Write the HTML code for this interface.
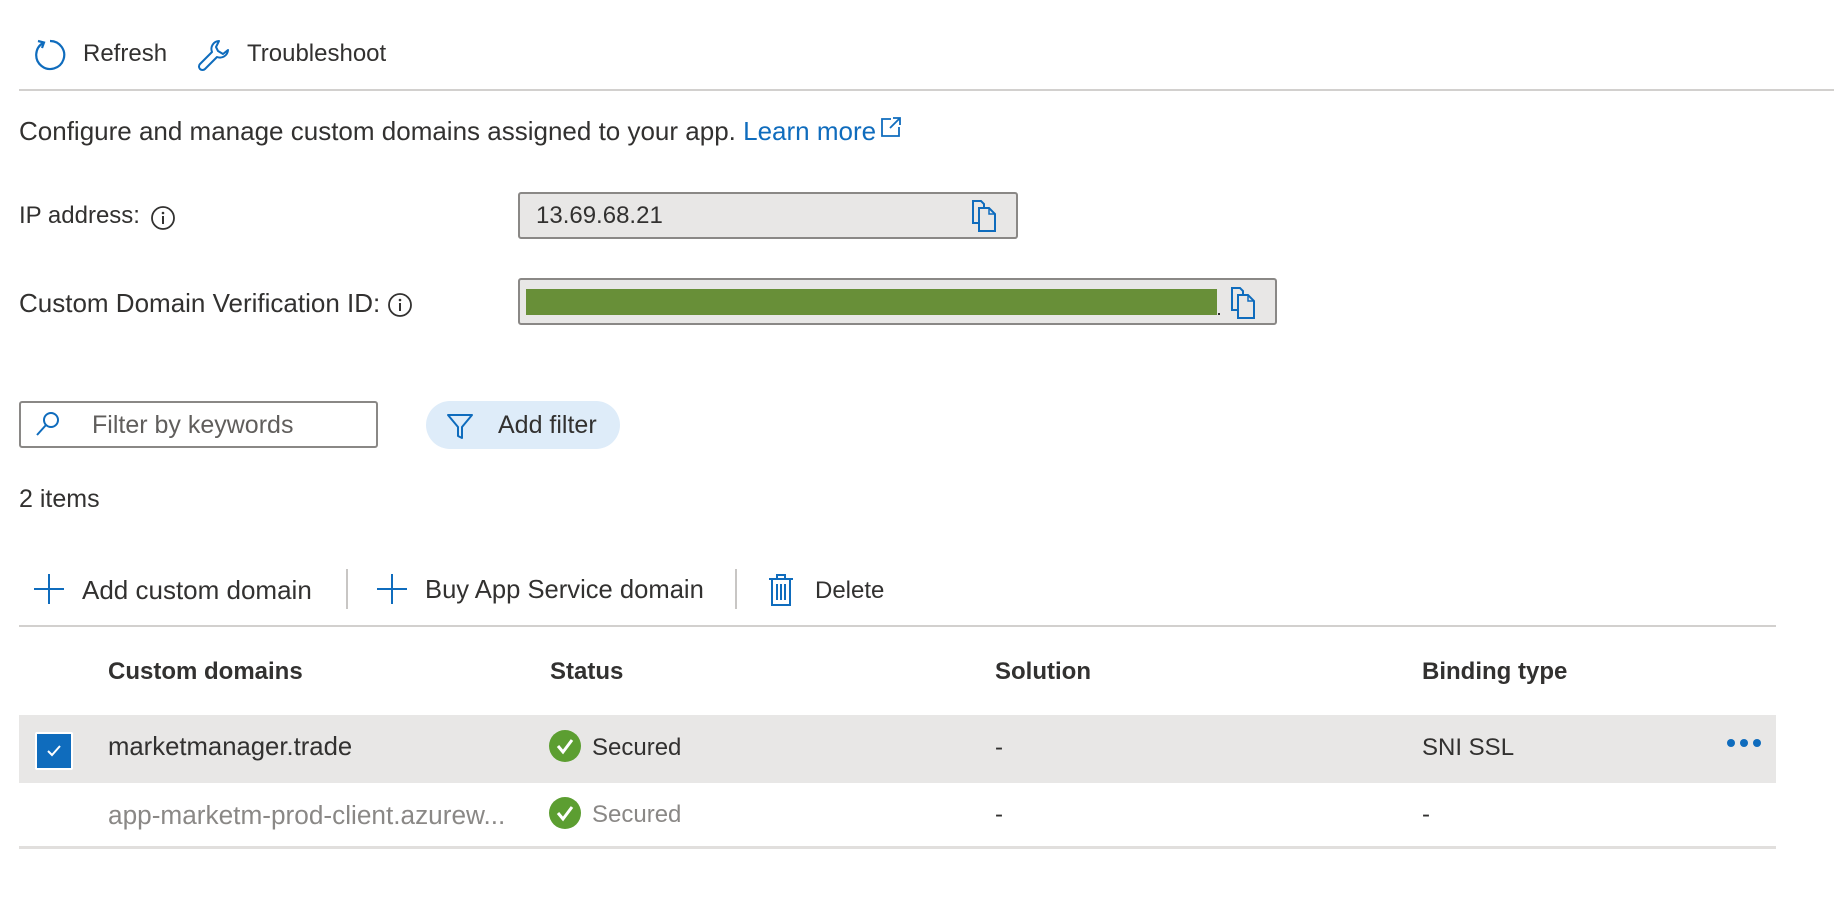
<!DOCTYPE html>
<html><head><meta charset="utf-8"><style>
*{margin:0;padding:0;box-sizing:border-box}
body{width:1834px;height:918px;background:#fff;font-family:"Liberation Sans",Arial,sans-serif;font-size:24px;color:#323130;position:relative;overflow:hidden}
.a{position:absolute;white-space:nowrap}
.l{font-size:26px}
.blue{color:#0f6cbd}
.box{position:absolute;background:#e8e7e6;border:2px solid #8a8886;border-radius:3px}
.hd{font-weight:bold;color:#323130}
</style></head><body>
<svg class="a" style="left:33px;top:38px" width="34" height="34" viewBox="0 0 34 34"><path d="M10 5 A14 14 0 1 0 17 3" fill="none" stroke="#0f6cbd" stroke-width="2.2"/><path d="M5 3 L11 4.5 L9 10" fill="none" stroke="#0f6cbd" stroke-width="2.2"/></svg>
<div class="a" style="left:83px;top:40px">Refresh</div>
<svg class="a" style="left:197px;top:38px" width="34" height="34" viewBox="0 0 34 34"><path d="M22 3 A8 8 0 0 0 15 14 L3 26 A3 3 0 0 0 8 31 L20 19 A8 8 0 0 0 31 12 L26 16 L21 13 L19 9 Z" fill="none" stroke="#0f6cbd" stroke-width="2" stroke-linejoin="round"/></svg>
<div class="a" style="left:247px;top:40px">Troubleshoot</div>
<div class="a" style="left:19px;top:89px;width:1815px;height:2px;background:#d2d0ce"></div>

<div class="a l" style="left:19px;top:116px">Configure and manage custom domains assigned to your app. <span class="blue">Learn more</span></div>
<svg class="a" style="left:879px;top:115px" width="24" height="24" viewBox="0 0 24 24"><path d="M12 4H3V21H20V12M14 3H21V10M21 3L11 13" fill="none" stroke="#0f6cbd" stroke-width="1.8"/></svg>

<div class="a" style="left:19px;top:202px">IP address:</div>
<svg class="a" style="left:150px;top:205px" width="26" height="26" viewBox="0 0 26 26"><circle cx="13" cy="13" r="11" fill="none" stroke="#323130" stroke-width="1.8"/><rect x="12" y="11" width="2" height="8" fill="#323130"/><circle cx="13" cy="8" r="1.3" fill="#323130"/></svg>
<div class="box" style="left:518px;top:192px;width:500px;height:47px"></div>
<div class="a" style="left:536px;top:202px">13.69.68.21</div>
<svg class="a" style="left:970px;top:199px" width="30" height="34" viewBox="0 0 30 34"><path d="M3 2H11L14 5V24H3Z" fill="none" stroke="#0f6cbd" stroke-width="2"/><path d="M9 9H19L25 15V32H9Z" fill="#e8e7e6" stroke="#0f6cbd" stroke-width="2"/><path d="M19 9V15H25" fill="none" stroke="#0f6cbd" stroke-width="1.5"/></svg>

<div class="a l" style="left:19px;top:288px">Custom Domain Verification ID:</div>
<svg class="a" style="left:387px;top:292px" width="26" height="26" viewBox="0 0 26 26"><circle cx="13" cy="13" r="11" fill="none" stroke="#323130" stroke-width="1.8"/><rect x="12" y="11" width="2" height="8" fill="#323130"/><circle cx="13" cy="8" r="1.3" fill="#323130"/></svg>
<div class="box" style="left:518px;top:278px;width:759px;height:47px"></div>
<div class="a" style="left:526px;top:289px;width:691px;height:26px;background:#688f38"></div>
<div class="a" style="left:1218px;top:313px;width:2px;height:2px;background:#323130"></div>
<svg class="a" style="left:1229px;top:286px" width="30" height="34" viewBox="0 0 30 34"><path d="M3 2H11L14 5V24H3Z" fill="none" stroke="#0f6cbd" stroke-width="2"/><path d="M9 9H19L25 15V32H9Z" fill="#e8e7e6" stroke="#0f6cbd" stroke-width="2"/><path d="M19 9V15H25" fill="none" stroke="#0f6cbd" stroke-width="1.5"/></svg>

<div class="a" style="left:19px;top:401px;width:359px;height:47px;border:2px solid #8a8886;border-radius:3px"></div>
<svg class="a" style="left:34px;top:410px" width="28" height="28" viewBox="0 0 28 28"><circle cx="17" cy="10" r="7" fill="none" stroke="#0f6cbd" stroke-width="2"/><path d="M12 15L3 25" stroke="#0f6cbd" stroke-width="2"/></svg>
<div class="a" style="left:92px;top:411px;color:#605e5c;font-size:25px">Filter by keywords</div>
<div class="a" style="left:426px;top:401px;width:194px;height:48px;background:#deecf9;border-radius:24px"></div>
<svg class="a" style="left:445px;top:411px" width="30" height="30" viewBox="0 0 30 30"><path d="M3 4H27L17 16V27L13 25V16Z" fill="none" stroke="#0f6cbd" stroke-width="2" stroke-linejoin="round"/></svg>
<div class="a" style="left:498px;top:411px;font-size:25px">Add filter</div>

<div class="a" style="left:19px;top:485px;font-size:25px">2 items</div>

<svg class="a" style="left:33px;top:573px" width="32" height="32" viewBox="0 0 32 32"><path d="M16 1V31M1 16H31" stroke="#0f6cbd" stroke-width="2"/></svg>
<div class="a l" style="left:82px;top:575px">Add custom domain</div>
<div class="a" style="left:346px;top:569px;width:2px;height:40px;background:#c8c6c4"></div>
<svg class="a" style="left:376px;top:573px" width="32" height="32" viewBox="0 0 32 32"><path d="M16 1V31M1 16H31" stroke="#0f6cbd" stroke-width="2"/></svg>
<div class="a" style="left:425px;top:576px;font-size:25.6px">Buy App Service domain</div>
<div class="a" style="left:735px;top:569px;width:2px;height:40px;background:#c8c6c4"></div>
<svg class="a" style="left:767px;top:572px" width="28" height="36" viewBox="0 0 28 36"><path d="M2 7H26M10 7V3H18V7M5 7V33H23V7M10 12V28M14 12V28M18 12V28" fill="none" stroke="#0f6cbd" stroke-width="2"/></svg>
<div class="a" style="left:815px;top:577px">Delete</div>
<div class="a" style="left:19px;top:625px;width:1757px;height:2px;background:#d2d0ce"></div>

<div class="a hd" style="left:108px;top:658px">Custom domains</div>
<div class="a hd" style="left:550px;top:658px">Status</div>
<div class="a hd" style="left:995px;top:658px">Solution</div>
<div class="a hd" style="left:1422px;top:658px">Binding type</div>

<div class="a" style="left:19px;top:715px;width:1757px;height:68px;background:#e8e7e6"></div>
<div class="a" style="left:35px;top:732px;width:38px;height:38px;background:#0f6cbd;border:2px solid #fff;border-radius:2px"></div>
<svg class="a" style="left:44px;top:741px" width="20" height="20" viewBox="0 0 20 20"><path d="M4 10L8 14L16 5" fill="none" stroke="#fff" stroke-width="2"/></svg>
<div class="a" style="left:108px;top:733px;font-size:25.7px">marketmanager.trade</div>
<svg class="a" style="left:549px;top:730px" width="32" height="32" viewBox="0 0 32 32"><circle cx="16" cy="16" r="16" fill="#5c9e31"/><path d="M9 16L14 22L23 10" fill="none" stroke="#fff" stroke-width="3"/></svg>
<div class="a" style="left:592px;top:734px">Secured</div>
<div class="a" style="left:995px;top:734px">-</div>
<div class="a" style="left:1422px;top:734px">SNI SSL</div>
<svg class="a" style="left:1726px;top:737px" width="36" height="12" viewBox="0 0 36 12"><circle cx="5" cy="6" r="4" fill="#0f6cbd"/><circle cx="18" cy="6" r="4" fill="#0f6cbd"/><circle cx="31" cy="6" r="4" fill="#0f6cbd"/></svg>

<div class="a" style="left:108px;top:800px;color:#8a8886;font-size:26.2px">app-marketm-prod-client.azurew...</div>
<svg class="a" style="left:549px;top:797px" width="32" height="32" viewBox="0 0 32 32"><circle cx="16" cy="16" r="16" fill="#5c9e31"/><path d="M9 16L14 22L23 10" fill="none" stroke="#fff" stroke-width="3"/></svg>
<div class="a" style="left:592px;top:801px;color:#8a8886">Secured</div>
<div class="a" style="left:995px;top:801px">-</div>
<div class="a" style="left:1422px;top:801px">-</div>
<div class="a" style="left:19px;top:846px;width:1757px;height:3px;background:#e1dfdd"></div>
</body></html>
